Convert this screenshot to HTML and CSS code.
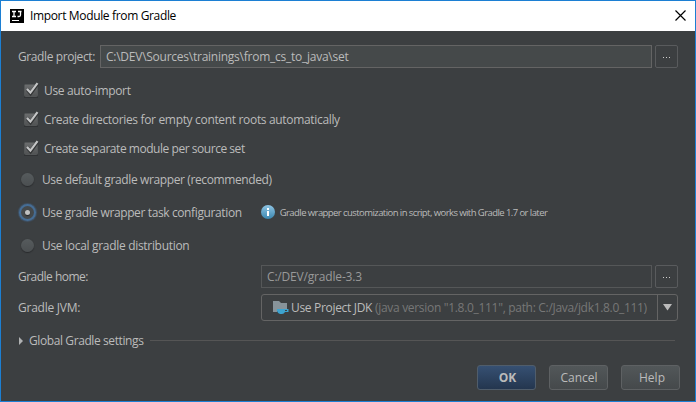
FILE: index.html
```html
<!DOCTYPE html>
<html lang="en">
<head>
<meta charset="utf-8">
<title>Import Module from Gradle</title>
<link rel="stylesheet" href="styles.css">
</head>
<body>
<main class="dialog">
  <header class="titlebar">
    <svg class="app-icon" width="14" height="14" viewBox="0 0 14 14"><path fill="#000" d="M0 0h14v14H0z"/><path d="M2 2.5h4M4 2v5M2 7.5h4M8 2.5h3.5M10.5 2v4q0 1.5-1.5 1.5H7.5" fill="none" stroke="#fff" stroke-width="1.3"/><path fill="#fff" d="M2 11h7v1H2z"/></svg>
    <h1 class="title">Import Module from Gradle</h1>
    <svg class="close" width="11" height="11" viewBox="0 0 11 11"><path d="M.5.5l10 10M10.5.5l-10 10" stroke="#000" stroke-width="1.2"/></svg>
  </header>

  <section class="row project">
    <label class="label project-label">Gradle project:</label>
    <div class="field editable"><span class="path">C:\DEV\Sources\trainings\from_cs_to_java\set</span></div>
    <button class="browse"><i></i><i></i><i></i></button>
  </section>

  <section class="checks">
    <label class="check"><svg width="17" height="18" viewBox="0 0 17 18"><use href="#checkbox"/></svg><span class="t-auto">Use auto-import</span></label>
    <label class="check"><svg width="17" height="18" viewBox="0 0 17 18"><use href="#checkbox"/></svg><span class="t-dirs">Create directories for empty content roots automatically</span></label>
    <label class="check"><svg width="17" height="18" viewBox="0 0 17 18"><use href="#checkbox"/></svg><span class="t-module">Create separate module per source set</span></label>
  </section>

  <section class="radios">
    <label class="radio"><span class="dot"></span><span class="t-default">Use default gradle wrapper (recommended)</span></label>
    <label class="radio"><span class="dot selected"></span><span class="t-default">Use gradle wrapper task configuration</span>
      <svg class="info" width="14" height="14" viewBox="0 0 14 14"><defs><linearGradient id="blue" x2="0" y2="1"><stop stop-color="#8fc5e4"/><stop offset="1" stop-color="#3b87b0"/></linearGradient></defs><circle cx="7" cy="7" r="7" fill="url(#blue)"/><path fill="#fff" d="M6 3h2v2H6zM6 6h2v5H6z"/></svg>
      <small class="hint">Gradle wrapper customization in script, works with Gradle 1.7 or later</small></label>
    <label class="radio"><span class="dot"></span><span class="t-local">Use local gradle distribution</span></label>
  </section>

  <section class="row home">
    <label class="label wide t-home">Gradle home:</label>
    <div class="field disabled"><span class="t-path">C:/DEV/gradle-3.3</span></div>
    <button class="browse"><i></i><i></i><i></i></button>
  </section>

  <section class="row jvm">
    <label class="label wide t-jvm">Gradle JVM:</label>
    <div class="combo">
      <svg class="folder" width="16" height="15" viewBox="0 0 16 15"><path fill="#87939a" d="M0 1h6l2 2h6v6H4v3H0z"/><path fill="#3da3cf" d="M4 9h11.5v3H12q-1 2-3 2H7q-2 0-3-3z"/><path fill="#3c3f41" d="M12 10h2v1h-2z"/></svg>
      <span class="jdk">Use Project JDK</span>
      <span class="version">(java version "1.8.0_111", path: C:/Java/jdk1.8.0_111)</span>
      <span class="arrow"><svg width="9" height="7" viewBox="0 0 9 7"><path fill="#bbb" d="M0 0h9L4.5 6.5z"/></svg></span>
    </div>
  </section>

  <section class="global">
    <svg width="4" height="8" viewBox="0 0 4 8"><path fill="#b0b2b3" d="M0 0l4 4-4 4z"/></svg>
    <span class="t-global">Global Gradle settings</span>
    <hr>
  </section>

  <footer class="actions">
    <button class="btn primary">OK</button>
    <button class="btn">Cancel</button>
    <button class="btn help">Help</button>
  </footer>
</main>

<svg class="symbols" width="0" height="0">
  <defs>
    <linearGradient id="box" x2="0" y2="1"><stop stop-color="#6b6d6e"/><stop offset="1" stop-color="#505253"/></linearGradient>
    <symbol id="checkbox" viewBox="0 0 17 18"><path fill="#303234" d="M1 5h14v12H1z"/><rect x="1.5" y="3.5" width="13" height="12" rx="1" fill="url(#box)" stroke="#535657"/><path d="M4.3 8.6l3.3 3.7 7-9.5" fill="none" stroke="#333536" stroke-width="3.6"/><path d="M4 8l3.4 3.6L14.5 2.2" fill="none" stroke="#c4c5c6" stroke-width="2.2"/></symbol>
  </defs>
</svg>
</body>
</html>
```
FILE: styles.css
```css
* { box-sizing: border-box; }
body { margin: 0; background: #3c3f41; color: #bbb; font: 12px/16px "Open Sans", "Noto Sans", sans-serif; }
button { margin: 0; padding: 0; font: inherit; color: inherit; }
span, label, small { white-space: nowrap; }
svg { flex: none; }

.dialog { width: 696px; height: 402px; border: 1px solid #1c7fd3; }
.titlebar { display: flex; align-items: center; height: 30px; padding: 0 9px; background: #fff; color: #000; }
.title { flex: 1; margin: 0 0 0 6px; font-size: 12px; font-weight: 400; letter-spacing: -.35px; }
.app-icon { margin-top: -1px; }
.close { margin-top: -2px; }

.row { display: flex; align-items: center; padding: 0 17px; }
.project { height: 23px; margin-top: 14px; }
.home { height: 23px; margin-top: 3px; }
.jvm { height: 27px; margin-top: 6px; }
.project-label { width: 82px; letter-spacing: -.4px; }
.wide { width: 243px; padding-top: 1px; }

.field { display: flex; flex: 1; align-items: center; height: 23px; margin-right: 3px; padding-left: 5px; border: 1px solid #646464; }
.editable { background: #45494a; }
.disabled { border-color: #555758; color: #999; }
.path { letter-spacing: -.25px; }
.browse { display: flex; justify-content: center; align-items: center; gap: 2px; width: 23px; height: 23px; padding-top: 2px; border: 1px solid #595b5d; border-radius: 2px; background: transparent; }
.browse i { width: 1px; height: 1px; background: #ccc; }

.checks { margin-top: 8px; }
.check { display: flex; align-items: center; height: 29px; padding-left: 22px; gap: 4px; }
.check svg { margin-top: -2px; }
.check span { padding-top: 1px; }
.radio { display: flex; align-items: center; height: 33px; padding-left: 20px; }
.radio > span:nth-child(2) { padding-top: 1px; }
.dot { position: relative; width: 13px; height: 13px; margin-right: 8px; border-radius: 50%; background: linear-gradient(#565b5d, #4b4f51); box-shadow: 0 1px 1px #292b2d, 0 0 1px #353739; }
.selected { background: #45494b; box-shadow: 0 0 0 2px #466d94, 0 0 1px 3px #3f5368; }
.selected::after { content: ""; position: absolute; inset: 4px; border-radius: 50%; background: #c0c1c1; box-shadow: 0 1px 1px #242628; }
.info { margin: -2px 5px 0 19px; }
.hint { font-size: 9.5px; letter-spacing: -.57px; }

.t-auto { letter-spacing: -.33px; }
.t-dirs { letter-spacing: -.33px; }
.t-module { letter-spacing: -.46px; }
.t-default { letter-spacing: -.38px; }
.t-local { letter-spacing: -.31px; }
.t-global { letter-spacing: -.4px; }
.t-home { letter-spacing: -.51px; }
.t-jvm { letter-spacing: -.24px; }
.t-path { letter-spacing: -.18px; }

.combo { display: flex; flex: 1; align-items: center; height: 27px; padding-left: 11px; border: 1px solid #646464; border-radius: 3px; }
.folder { margin-right: 2px; }
.jdk { width: 84px; padding-top: 1px; letter-spacing: -.32px; }
.version { padding-top: 1px; color: #777; letter-spacing: -.31px; }
.arrow { display: flex; justify-content: center; align-items: center; width: 20px; height: 25px; margin-left: auto; border-left: 1px solid #646464; }

.global { display: flex; align-items: center; height: 21px; margin-top: 9px; padding: 0 20px 0 18px; }
.global span { width: 121px; margin-left: 6px; padding-top: 1px; }
.global hr { flex: 1; height: 1px; margin: 0; border: 0; background: #555; }

.actions { display: flex; justify-content: flex-end; gap: 13px; margin-top: 14px; padding-right: 15px; }
.btn { width: 59px; height: 25px; padding-left: 1px; border: 1px solid #5e6163; border-radius: 3px; background: linear-gradient(#525759, #45494b); }
.primary { padding-left: 2px; border-color: #505d6b; background: linear-gradient(#365072, #24364f); font-weight: 700; }
.help { padding-left: 3px; }
.symbols { display: block; }
```
